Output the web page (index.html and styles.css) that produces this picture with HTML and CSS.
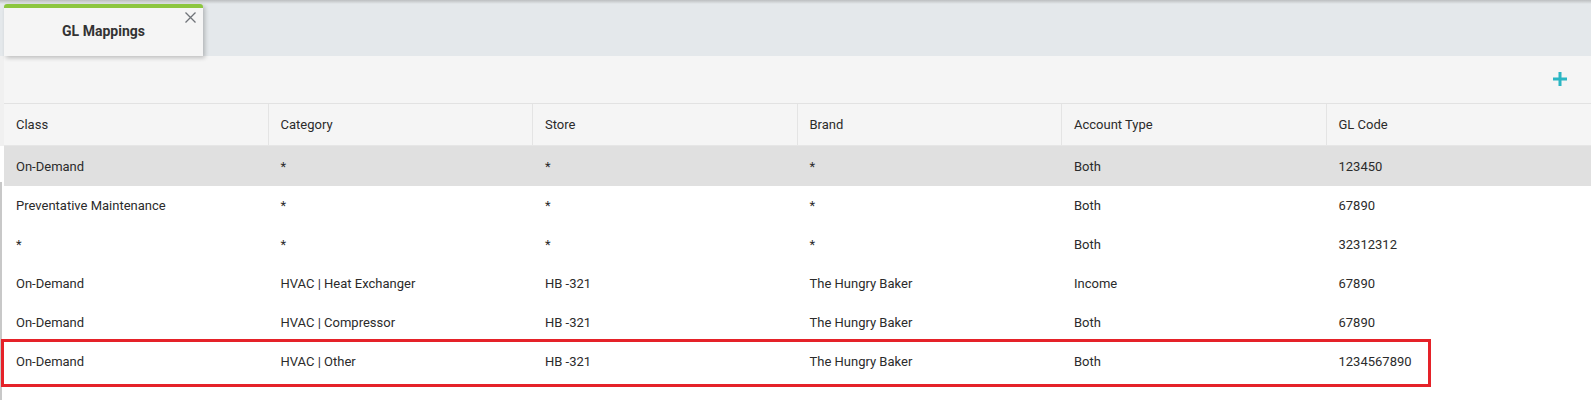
FILE: index.html
```html
<!DOCTYPE html>
<html lang="en">
<head>
    <meta charset="UTF-8">
    <meta name="viewport" content="width=device-width, initial-scale=1.0">
    <title>GL Mappings</title>
    <link rel="stylesheet" href="styles.css">
</head>
<body>
    <div class="tabbar">
        <div class="tab">
            <span class="tab-title">GL Mappings</span>
            <svg class="tab-close" width="11" height="11" viewBox="0 0 11 11">
                <path d="M0.5 0.5 L10.5 10.5 M10.5 0.5 L0.5 10.5" stroke="#6f7378" stroke-width="1.3" fill="none"/>
            </svg>
        </div>
    </div>

    <div class="panel">
        <div class="toolbar">
            <svg class="add-btn" width="14" height="14" viewBox="0 0 14 14">
                <path d="M7 0 V14 M0 7 H14" stroke="#2bb6c3" stroke-width="3" fill="none"/>
            </svg>
        </div>

        <div class="grid-head">
            <div class="cell">Class</div>
            <div class="cell">Category</div>
            <div class="cell">Store</div>
            <div class="cell">Brand</div>
            <div class="cell">Account Type</div>
            <div class="cell">GL Code</div>
        </div>

        <div class="grid-body">
            <div class="row selected">
                <div class="cell">On-Demand</div>
                <div class="cell">*</div>
                <div class="cell">*</div>
                <div class="cell">*</div>
                <div class="cell">Both</div>
                <div class="cell">123450</div>
            </div>
            <div class="row">
                <div class="cell">Preventative Maintenance</div>
                <div class="cell">*</div>
                <div class="cell">*</div>
                <div class="cell">*</div>
                <div class="cell">Both</div>
                <div class="cell">67890</div>
            </div>
            <div class="row">
                <div class="cell">*</div>
                <div class="cell">*</div>
                <div class="cell">*</div>
                <div class="cell">*</div>
                <div class="cell">Both</div>
                <div class="cell">32312312</div>
            </div>
            <div class="row">
                <div class="cell">On-Demand</div>
                <div class="cell">HVAC | Heat Exchanger</div>
                <div class="cell">HB -321</div>
                <div class="cell">The Hungry Baker</div>
                <div class="cell">Income</div>
                <div class="cell">67890</div>
            </div>
            <div class="row">
                <div class="cell">On-Demand</div>
                <div class="cell">HVAC | Compressor</div>
                <div class="cell">HB -321</div>
                <div class="cell">The Hungry Baker</div>
                <div class="cell">Both</div>
                <div class="cell">67890</div>
            </div>
            <div class="row marked">
                <div class="cell">On-Demand</div>
                <div class="cell">HVAC | Other</div>
                <div class="cell">HB -321</div>
                <div class="cell">The Hungry Baker</div>
                <div class="cell">Both</div>
                <div class="cell">1234567890</div>
                <div class="mark-box"></div>
            </div>
        </div>
    </div>
</body>
</html>
```

FILE: styles.css
```css
body {
    margin: 0;
    font-family: Roboto, "Liberation Sans", Arial, sans-serif;
    font-size: 13px;
    color: #2b2b2b;
    background-color: white;
}
.tabbar {
    height: 52px;
    padding: 4px 0 0 4px;
    background: linear-gradient(#bcbec0, #e4e8eb 4px) #e4e8eb;
}
.tab {
    position: relative;
    width: 199px;
    height: 48px;
    border-top: 4px solid #8cc63f;
    border-radius: 3px 3px 0 0;
    background-color: #f5f5f5;
    box-shadow: 2px 2px 4px rgba(0, 0, 0, 0.22);
    display: flex;
    align-items: center;
    justify-content: center;
}
.tab-title {
    font-weight: bold;
    font-size: 14px;
    color: #333;
    margin-top: -2px;
}
.tab-close {
    position: absolute;
    top: 4px;
    right: 7px;
}
.panel {
    background-color: #f0f0f0;
}
.toolbar {
    margin-left: 4px;
    height: 47px;
    background-color: #f5f5f5;
    border-bottom: 1px solid #e2e2e2;
    display: flex;
    align-items: center;
    justify-content: flex-end;
    padding-right: 24px;
}
.add-btn {
    margin-top: -1px;
}
.grid-head {
    margin-left: 4px;
    height: 41px;
    display: grid;
    grid-template-columns: repeat(6, 1fr);
    background-color: #f5f5f5;
    border-bottom: 1px solid #e6e6e6;
}
.grid-head .cell {
    border-right: 1px solid #e4e4e4;
}
.grid-head .cell:last-child {
    border-right: none;
}
.cell {
    padding: 0 12px;
    display: flex;
    align-items: center;
    white-space: nowrap;
}
.grid-body {
    padding-left: 4px;
    padding-bottom: 21px;
    background: linear-gradient(#c8c8c8, #c8c8c8) 0 36px / 2px 100% no-repeat, white;
}
.row {
    height: 39px;
    display: grid;
    grid-template-columns: repeat(6, 1fr);
    background-color: white;
}
.row.selected {
    height: 40px;
    background-color: #e0e0e0;
}
.row.marked {
    position: relative;
}
.mark-box {
    position: absolute;
    top: -3px;
    left: -3px;
    width: 1424px;
    height: 42px;
    border: 3px solid #e52229;
}
```
